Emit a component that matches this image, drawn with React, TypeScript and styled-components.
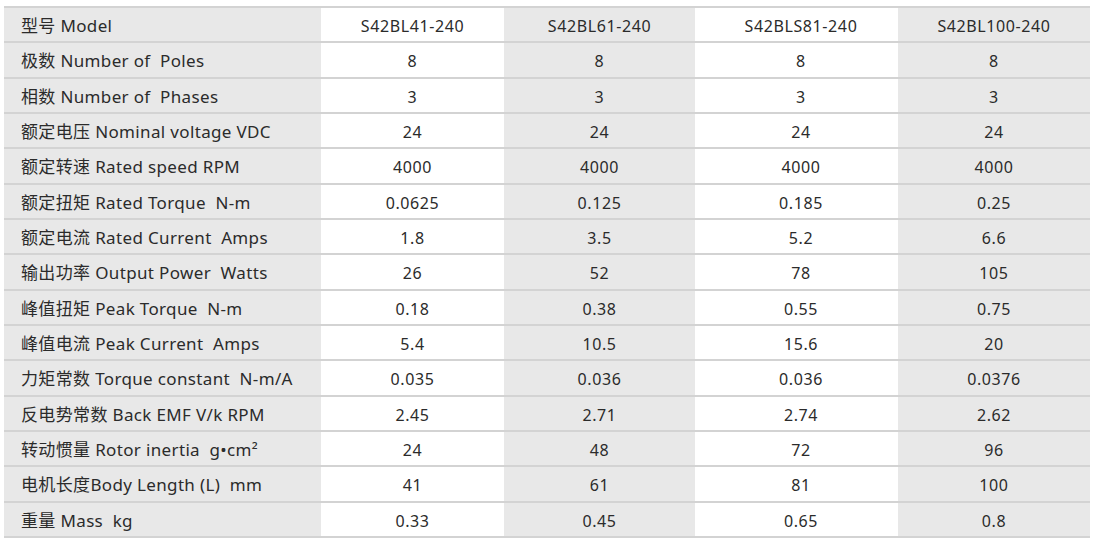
import React from "react";
import styled, { createGlobalStyle } from "styled-components";

const Global = createGlobalStyle`
  html, body { margin: 0; padding: 0; background: #ffffff; }
  body { font-family: "Noto Sans", "Noto Sans CJK SC", sans-serif; color: #2b2b2b; }
`;

const Page = styled.div`
  padding: 6px 9px 0 4px;
  width: 1099px;
  box-sizing: border-box;
`;

const Table = styled.div`
  display: grid;
  grid-template-columns: 317px 183px 191px 203px 192px;
  border-top: 2px solid #d3d3d3;
`;

const Row = styled.div`
  display: contents;
`;

const Cell = styled.div<{ $grey: boolean; $shift?: number }>`
  height: 35.33px;
  box-sizing: border-box;
  border-bottom: 2px solid #d3d3d3;
  background: ${(p) => (p.$grey ? "#e8e8e8" : "#ffffff")};
  display: flex;
  align-items: center;
  justify-content: center;
  padding-left: ${(p) => p.$shift ?? 0}px;
  padding-top: 3px;
  font-size: 16px;
  letter-spacing: 0.6px;
  white-space: pre;
`;

const LabelCell = styled(Cell)`
  justify-content: flex-start;
  padding-left: 17px;
  padding-top: 0;
  font-size: 17px;
  letter-spacing: 0.35px;
`;

const rows: [string, string[]][] = [
  ["型号 Model", ["S42BL41-240", "S42BL61-240", "S42BLS81-240", "S42BL100-240"]],
  ["极数 Number of  Poles", ["8", "8", "8", "8"]],
  ["相数 Number of  Phases", ["3", "3", "3", "3"]],
  ["额定电压 Nominal voltage VDC", ["24", "24", "24", "24"]],
  ["额定转速 Rated speed RPM", ["4000", "4000", "4000", "4000"]],
  ["额定扭矩 Rated Torque  N-m", ["0.0625", "0.125", "0.185", "0.25"]],
  ["额定电流 Rated Current  Amps", ["1.8", "3.5", "5.2", "6.6"]],
  ["输出功率 Output Power  Watts", ["26", "52", "78", "105"]],
  ["峰值扭矩 Peak Torque  N-m", ["0.18", "0.38", "0.55", "0.75"]],
  ["峰值电流 Peak Current  Amps", ["5.4", "10.5", "15.6", "20"]],
  ["力矩常数 Torque constant  N-m/A", ["0.035", "0.036", "0.036", "0.0376"]],
  ["反电势常数 Back EMF V/k RPM", ["2.45", "2.71", "2.74", "2.62"]],
  ["转动惯量 Rotor inertia  g•cm²", ["24", "48", "72", "96"]],
  ["电机长度Body Length (L)  mm", ["41", "61", "81", "100"]],
  ["重量 Mass  kg", ["0.33", "0.45", "0.65", "0.8"]],
];

const shifts = [0, 0, 9, 0];

export default function App() {
  return (
    <>
      <Global />
      <Page>
        <Table>
          {rows.map(([label, vals]) => (
            <Row key={label}>
              <LabelCell $grey>{label}</LabelCell>
              {vals.map((v, i) => (
                <Cell key={i} $grey={i % 2 === 1} $shift={shifts[i]}>
                  {v}
                </Cell>
              ))}
            </Row>
          ))}
        </Table>
      </Page>
    </>
  );
}
